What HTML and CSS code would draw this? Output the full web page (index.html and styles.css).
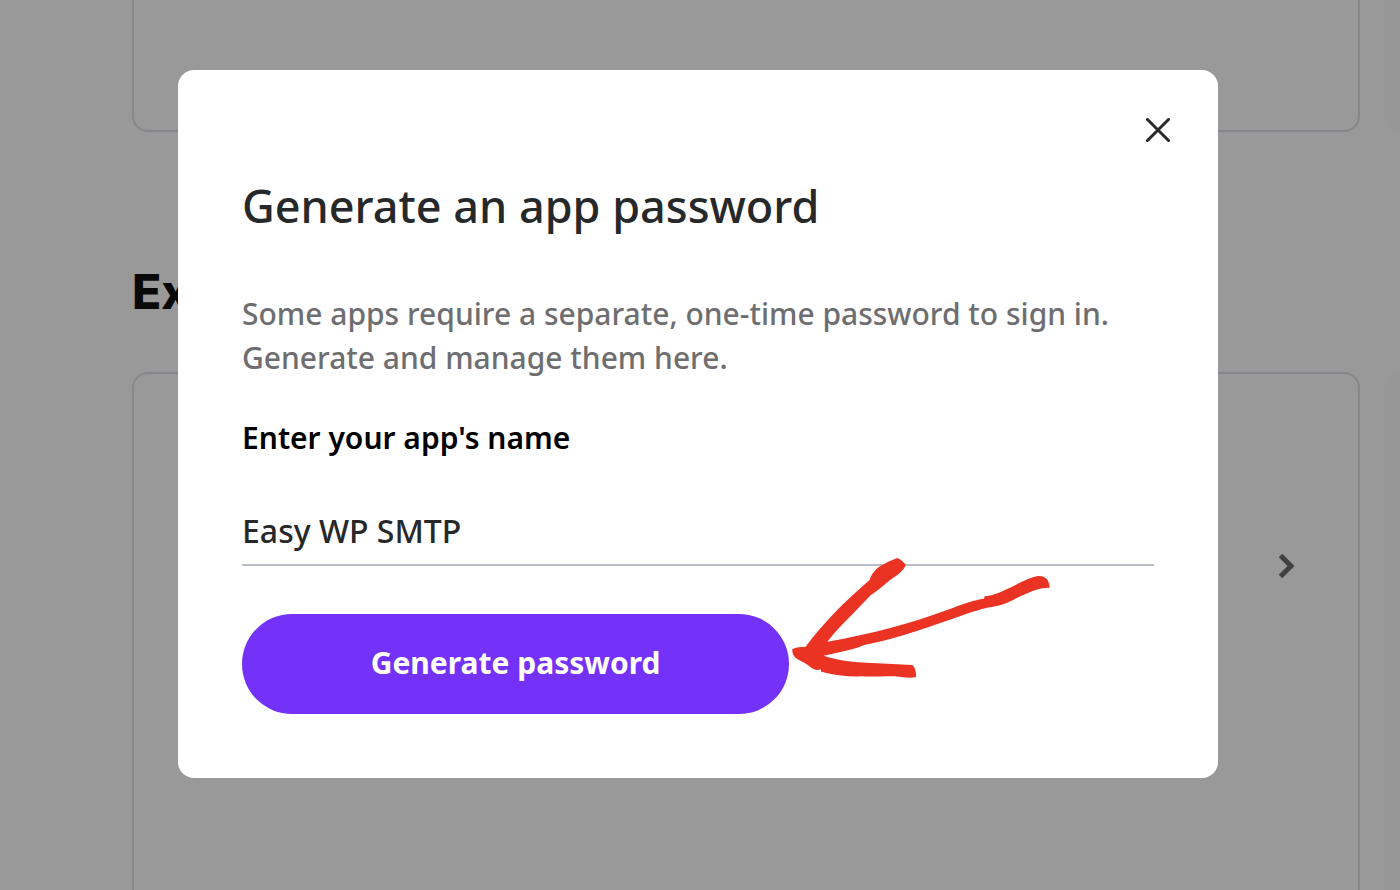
FILE: index.html
```html
<!DOCTYPE html>
<html lang="en">
<head>
    <meta charset="UTF-8">
    <meta name="viewport" content="width=device-width, initial-scale=1.0">
    <title>Generate an app password</title>
    <link rel="stylesheet" href="styles.css">
</head>
<body>
    <main class="page">
        <section class="row">
            <div class="card card-top"></div>
            <div class="side side-top"></div>
        </section>

        <h2 class="section-title">Ex</h2>

        <section class="row row-fill">
            <div class="card card-link">
                <svg class="chevron" viewBox="0 0 18 28" aria-hidden="true">
                    <path d="M3.5 3.5L14 14L3.5 24.5"/>
                </svg>
            </div>
            <div class="side"></div>
        </section>
    </main>

    <!-- Modal -->
    <div class="modal-overlay">
        <div class="modal" role="dialog" aria-labelledby="modalTitle">
            <div class="modal-header">
                <button class="close-button" type="button" aria-label="Close">
                    <svg viewBox="0 0 24 24" aria-hidden="true">
                        <path d="M1.5 1.5L22.5 22.5M22.5 1.5L1.5 22.5"/>
                    </svg>
                </button>
            </div>

            <h1 class="modal-title" id="modalTitle">Generate an app password</h1>
            <p class="modal-text">Some apps require a separate, one-time password to sign in. Generate and manage them here.</p>

            <form class="password-form">
                <label class="field-label" for="appName">Enter your app's name</label>
                <input class="field-input" id="appName" type="text" value="Easy WP SMTP" spellcheck="false" autocomplete="off">

                <div class="submit-wrap">
                    <button class="submit-button" type="button">Generate password</button>
                    <svg class="arrow" viewBox="0 0 870 450" aria-hidden="true">
                        <path d="M37 327C48 321 62 321 77 320C130 249 195 183 269 120C274 102 287 87 301 78C318 68 335 61 352 54C363 59 371 66 377 75C372 91 354 104 337 115C316 132 295 151 272 166L220 220C191 249 164 276 142 305C275 282 397 249 510 207C548 192 582 180 612 176L614 169C638 167 663 156 690 143C721 127 750 113 773 108C797 105 808 121 809 143C779 142 745 157 710 174C681 190 659 198 629 202C583 211 535 232 481 249C405 276 330 300 252 315C221 329 177 337 131 347C172 361 223 367 276 369L397 375C406 384 409 396 408 411C393 415 370 412 345 409C312 407 280 411 245 409C200 410 160 405 124 395L122 388C106 394 94 384 80 373C64 362 48 358 42 348C37 341 37 335 37 327Z"/>
                    </svg>
                </div>
            </form>
        </div>
    </div>
</body>
</html>
```
FILE: styles.css
```css
* {
    margin: 0;
    padding: 0;
    box-sizing: border-box;
}

body {
    height: 100vh;
    background-color: #fff;
    color: #232a31;
    font-family: 'Noto Sans', 'Open Sans', sans-serif;
    overflow: hidden;
}

/* Page behind the modal */
.page {
    height: 100vh;
    padding-left: 132px;
    display: flex;
    flex-direction: column;
}

.row {
    display: grid;
    grid-template-columns: 1fr 16px;
    gap: 24px;
}

.row-fill {
    flex: 1;
}

.card {
    border: 2px solid #e0e0e9;
    border-radius: 16px;
}

.card-top {
    height: 132px;
    border-top: none;
    border-radius: 0 0 16px 16px;
}

.card-link {
    padding: 178px 63px 0;
    border-bottom: none;
    border-radius: 16px 16px 0 0;
    text-align: right;
}

.chevron {
    width: 18px;
    height: 28px;
    fill: none;
    stroke: #6b6d70;
    stroke-width: 5;
}

.side {
    background-color: #fcfcfc;
    border-radius: 16px 0 0 0;
}

.side-top {
    border-radius: 0 0 0 16px;
}

.section-title {
    height: 240px;
    padding-top: 130px;
    font-family: Inter, sans-serif;
    font-size: 48px;
    font-weight: 800;
    line-height: 60px;
    color: #101010;
}

/* Modal */
.modal-overlay {
    position: absolute;
    inset: 0;
    padding: 70px 182px 0 178px;
    background-color: rgba(0, 0, 0, 0.4);
}

.modal {
    padding: 44px 64px 64px;
    border-radius: 16px;
    background-color: #fff;
}

.modal-header {
    display: flex;
    justify-content: flex-end;
    margin-right: -20px;
}

.close-button {
    width: 32px;
    height: 32px;
    padding: 4px;
    border: none;
    background: none;
    cursor: pointer;
}

.close-button svg {
    display: block;
    fill: none;
    stroke: #28292b;
    stroke-width: 3;
    stroke-linecap: round;
}

.modal-title {
    margin-top: 28px;
    font-size: 45px;
    font-weight: 500;
    line-height: 64px;
    color: #26282a;
}

.modal-text {
    margin-top: 54px;
    font-size: 30px;
    font-weight: 500;
    line-height: 44px;
    color: #6e6e70;
}

.field-label {
    display: block;
    margin-top: 36px;
    font-size: 30px;
    font-weight: 600;
    line-height: 44px;
    color: #000;
}

.field-input {
    display: block;
    width: 100%;
    height: 70px;
    margin-top: 36px;
    border: none;
    border-bottom: 2px solid #b9bdc5;
    outline: none;
    background: none;
    font-family: inherit;
    font-size: 32px;
    font-weight: 500;
    color: #26282a;
}

.submit-wrap {
    position: relative;
    width: 60%;
    margin-top: 48px;
}

.submit-button {
    display: block;
    width: 100%;
    height: 100px;
    padding-bottom: 4px;
    border: none;
    border-radius: 50px;
    background-color: #7431f8;
    color: #fff;
    font-family: inherit;
    font-size: 30px;
    font-weight: 700;
    cursor: pointer;
}

/* Hand-drawn arrow pointing at the button */
.arrow {
    position: absolute;
    top: -74px;
    left: calc(100% - 9px);
    width: 290px;
    height: 150px;
    fill: #ea3323;
    pointer-events: none;
}
```
